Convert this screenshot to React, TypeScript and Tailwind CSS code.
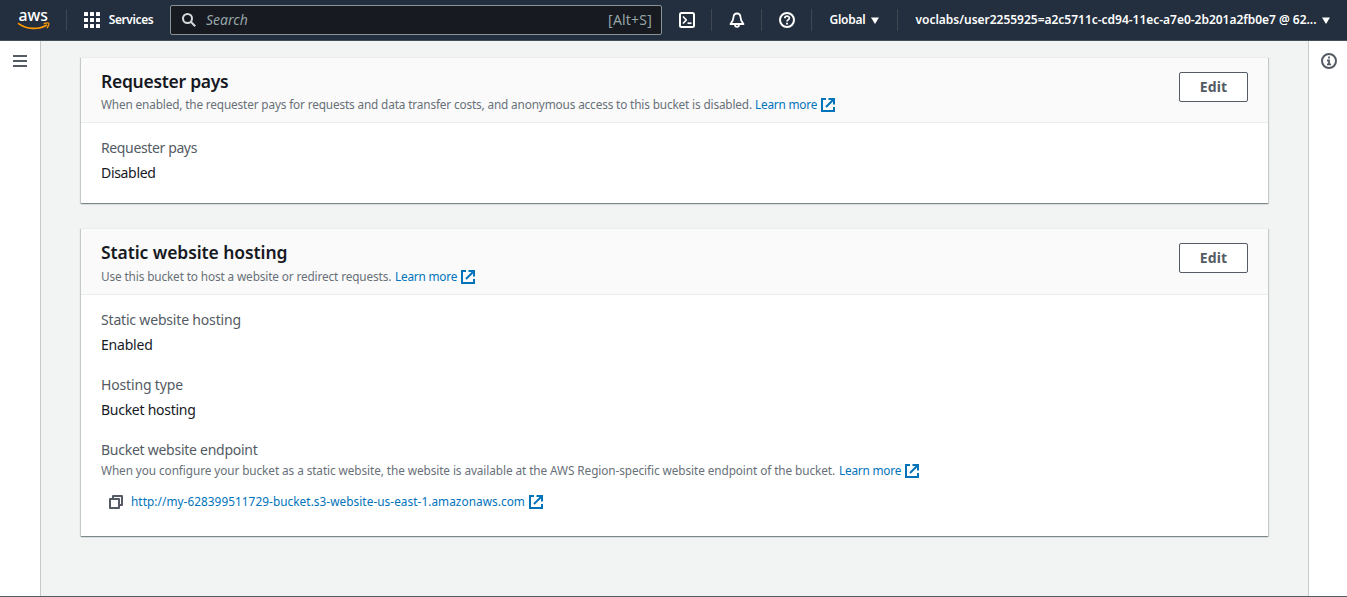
import type { ReactNode } from "react";

const ExternalIcon = () => (
  <svg width="14" height="14" viewBox="0 0 14 14" fill="none" stroke="#0073bb" strokeWidth="2" className="ml-[3px] shrink-0">
    <path d="M5 1H1v12h12V9" />
    <path d="M7.500 1H13v5.500M12.500 1.500L5 9" />
  </svg>
);

const CopyIcon = () => (
  <svg width="14" height="14" viewBox="0 0 14 14" fill="none" stroke="#545b64" strokeWidth="2" strokeLinejoin="round" className="shrink-0">
    <path d="M1 4h9v9H1z" />
    <path d="M4 4V1h9v9h-3" />
  </svg>
);

const AwsLogo = () => (
  <svg width="34" height="40" viewBox="0 -8 34 40">
    <text x="1.500" y="12.900" textLength="29.500" lengthAdjust="spacingAndGlyphs" fill="#fff" fontSize="17" fontWeight="500" fontFamily="Noto Sans, sans-serif">
      aws
    </text>
    <path d="M1.500 15.600C9.500 21.400 21.500 21.900 29.500 17.200" fill="none" stroke="#ff9900" strokeWidth="1.600" strokeLinecap="round" />
    <path d="M27.200 15.700c1.700-.8 4-.9 4.500-.4.500.6-.2 3.200-1.600 4.400" fill="none" stroke="#ff9900" strokeWidth="1.300" strokeLinecap="round" />
  </svg>
);

const Caret = () => (
  <svg width="8" height="7" viewBox="0 0 8 7" className="shrink-0">
    <path d="M0 0.500h8L4 7z" fill="#fff" />
  </svg>
);

const Divider = () => <div className="h-[22px] w-px shrink-0 bg-[#414750]" />;

function IconButton({ children }: { children: ReactNode }) {
  return (
    <button className="flex h-10 w-[49px] shrink-0 items-center justify-center">
      <svg width="16" height="16" viewBox="0 0 16 16" fill="none" stroke="#fff" strokeWidth="2" strokeLinejoin="round">
        {children}
      </svg>
    </button>
  );
}

function TopBar() {
  return (
    <header className="flex h-[41px] shrink-0 items-center border-b border-[#454f5c] bg-[#232f3e] pl-[17px] font-semibold text-white">
      <AwsLogo />
      <div className="ml-[15px] flex items-center">
        <Divider />
      </div>
      <button className="ml-[17px] flex items-center">
        <span className="grid grid-cols-3 gap-[2px]">
          {Array.from({ length: 9 }, (_, i) => (
            <i key={i} className="size-1 rounded-[0.5px] bg-white" />
          ))}
        </span>
        <span className="ml-2 w-[46px] text-[12px] leading-5 tracking-[-0.400px]">Services</span>
      </button>
      <div className="ml-4 flex h-[30px] w-[492px] shrink-0 items-center rounded-[2px] border border-[#879596] bg-[#171a21] pl-[11px] pr-[9px] text-[14px] font-normal leading-5 text-[#95a5a6]">
        <svg width="14" height="14" viewBox="0 0 14 14" fill="none" stroke="#d5dbdb" strokeWidth="2">
          <circle cx="5.500" cy="5.500" r="4.500" />
          <path d="M8.800 8.800l4.400 4.400" />
        </svg>
        <span className="ml-[10px] flex-1 pb-px italic">Search</span>
        <span className="pb-px tracking-[0.2px]">[Alt+S]</span>
      </div>
      <IconButton>
        <rect x="1" y="1" width="14" height="14" rx="1.500" />
        <path d="M4 4.500L7.300 8 4 11.500" strokeWidth="1.700" />
        <path d="M8.500 11.200h4" strokeWidth="1.700" />
      </IconButton>
      <Divider />
      <IconButton>
        <path d="M8 1.500C5.700 1.500 4.600 3.200 4.500 5.200 4.400 8 3.500 9.700 1.500 12h13C12.500 9.700 11.600 8 11.500 5.200 11.400 3.200 10.300 1.500 8 1.500z" strokeWidth="1.800" />
        <path d="M6 12.500c0 3.200 4 3.200 4 0" strokeWidth="1.800" />
      </IconButton>
      <Divider />
      <IconButton>
        <circle cx="8" cy="8" r="7" />
        <path d="M5.800 6.300c0-3 4.600-2.900 4.600-.2C10.400 7.800 8 7.800 8 9.600" strokeWidth="1.700" />
        <path d="M8 10.700v1.800" strokeWidth="1.900" />
      </IconButton>
      <Divider />
      <button className="flex w-[85px] shrink-0 items-center pl-[17.500px] text-[12px] tracking-[-0.250px]">
        <span className="mr-[5.500px] w-9 whitespace-nowrap">Global</span>
        <Caret />
      </button>
      <Divider />
      <button className="flex items-center whitespace-nowrap pl-[17.500px] text-[12px] tracking-[-0.020px]">
        <span className="mr-[5.500px] w-[401px]">voclabs/user2255925=a2c5711c-cd94-11ec-a7e0-2b201a2fb0e7 @ 62...</span>
        <Caret />
      </button>
    </header>
  );
}

function LearnMore() {
  return (
    <a className="ml-[4px] flex items-center text-[#0073bb]">
      <span className="w-[63px] pb-0.5 leading-4 tracking-[-0.200px]">Learn more</span>
      <ExternalIcon />
    </a>
  );
}

function Card({ title, headClass, children }: { title: ReactNode; headClass: string; children: ReactNode }) {
  return (
    <section className="border-t border-[#eaeded] bg-white shadow-[0_1px_1px_0_rgba(0,28,36,0.3),1px_1px_1px_0_rgba(0,28,36,0.15),-1px_1px_1px_0_rgba(0,28,36,0.15)]">
      <div className={`flex items-start justify-between border-b border-[#eaeded] bg-[#fafafa] pl-5 pr-5 ${headClass}`}>
        <div className="pt-[10px]">{title}</div>
        <button className="mt-[14px] h-[30px] w-[69px] rounded-[2px] border border-[#545b64] bg-white text-[14px] font-bold leading-[28px] tracking-[0.2px] text-[#545b64]">
          Edit
        </button>
      </div>
      <div className="px-5 pt-[15px]">{children}</div>
    </section>
  );
}

const heading = "text-[17.500px] font-semibold leading-[26px] text-[#16191f]";
const hint = "flex h-[18px] items-center whitespace-nowrap text-[11.800px] text-[#687078]";
const hintText = "pb-0.5 leading-4";
const label = "text-[14px] leading-5 text-[#545b64]";
const value = "mt-[5px] text-[14px] leading-5 text-[#16191f]";

export default function App() {
  return (
    <div className="flex h-[597px] w-[1347px] flex-col overflow-hidden border-b border-[#545b64] bg-[#f2f3f3] font-['Noto_Sans',sans-serif]">
      <TopBar />
      <div className="flex min-h-0 flex-1">
        <aside className="w-[41px] shrink-0 border-r border-[#c5cbcb] bg-white pl-[13px] pt-[14px]">
          <svg width="14" height="12" viewBox="0 0 14 12" fill="none" stroke="#545b64" strokeWidth="2">
            <path d="M0 1h14M0 6h14M0 11h14" />
          </svg>
        </aside>
        <main className="flex min-w-0 flex-1 flex-col gap-[25px] px-10 pt-4">
          <Card
            headClass="h-[65px]"
            title={
              <>
                <h2 className={`${heading} tracking-[-0.280px]`}>Requester pays</h2>
                <p className={`${hint} mt-[2px]`}>
                  <span className={`${hintText} w-[650px] tracking-[-0.150px]`}>
                    When enabled, the requester pays for requests and data transfer costs, and anonymous access to this bucket is disabled.
                  </span>
                  <LearnMore />
                </p>
              </>
            }
          >
            <div className="h-[65px]">
              <div className={`${label} tracking-[-0.370px]`}>Requester pays</div>
              <div className={`${value} tracking-[-0.320px]`}>Disabled</div>
            </div>
          </Card>
          <Card
            headClass="h-[66px]"
            title={
              <>
                <h2 className={`${heading} tracking-[-0.090px]`}>Static website hosting</h2>
                <p className={`${hint} mt-[3px]`}>
                  <span className={`${hintText} w-[290px] tracking-[-0.130px]`}>Use this bucket to host a website or redirect requests.</span>
                  <LearnMore />
                </p>
              </>
            }
          >
            <div className="h-[226px]">
              <div className={`${label} tracking-[-0.180px]`}>Static website hosting</div>
              <div className={`${value} tracking-[-0.200px]`}>Enabled</div>
              <div className={`${label} mt-5 tracking-[-0.160px]`}>Hosting type</div>
              <div className={`${value} tracking-[-0.270px]`}>Bucket hosting</div>
              <div className={`${label} mt-5 tracking-[-0.260px]`}>Bucket website endpoint</div>
              <p className={`${hint} mt-[2px]`}>
                <span className={`${hintText} w-[734px] tracking-[-0.087px]`}>
                  When you configure your bucket as a static website, the website is available at the AWS Region-specific website endpoint of the bucket.
                </span>
                <LearnMore />
              </p>
              <div className="mt-[13px] flex h-[18px] items-center pl-2 text-[11.800px] text-[#0073bb]">
                <CopyIcon />
                <a className={`${hintText} ml-2 w-[395px] whitespace-nowrap tracking-[0.055px]`}>
                  http://my-628399511729-bucket.s3-website-us-east-1.amazonaws.com
                </a>
                <ExternalIcon />
              </div>
            </div>
          </Card>
        </main>
        <aside className="w-[39px] shrink-0 border-l border-[#c5cbcb] bg-white pl-3 pt-3">
          <svg width="16" height="16" viewBox="0 0 16 16" fill="none" stroke="#545b64" strokeWidth="2">
            <circle cx="8" cy="8" r="7" />
            <path d="M8 3.500v2M6 7.500h2v4M6 11.300h4" strokeWidth="1.800" />
          </svg>
        </aside>
      </div>
    </div>
  );
}
